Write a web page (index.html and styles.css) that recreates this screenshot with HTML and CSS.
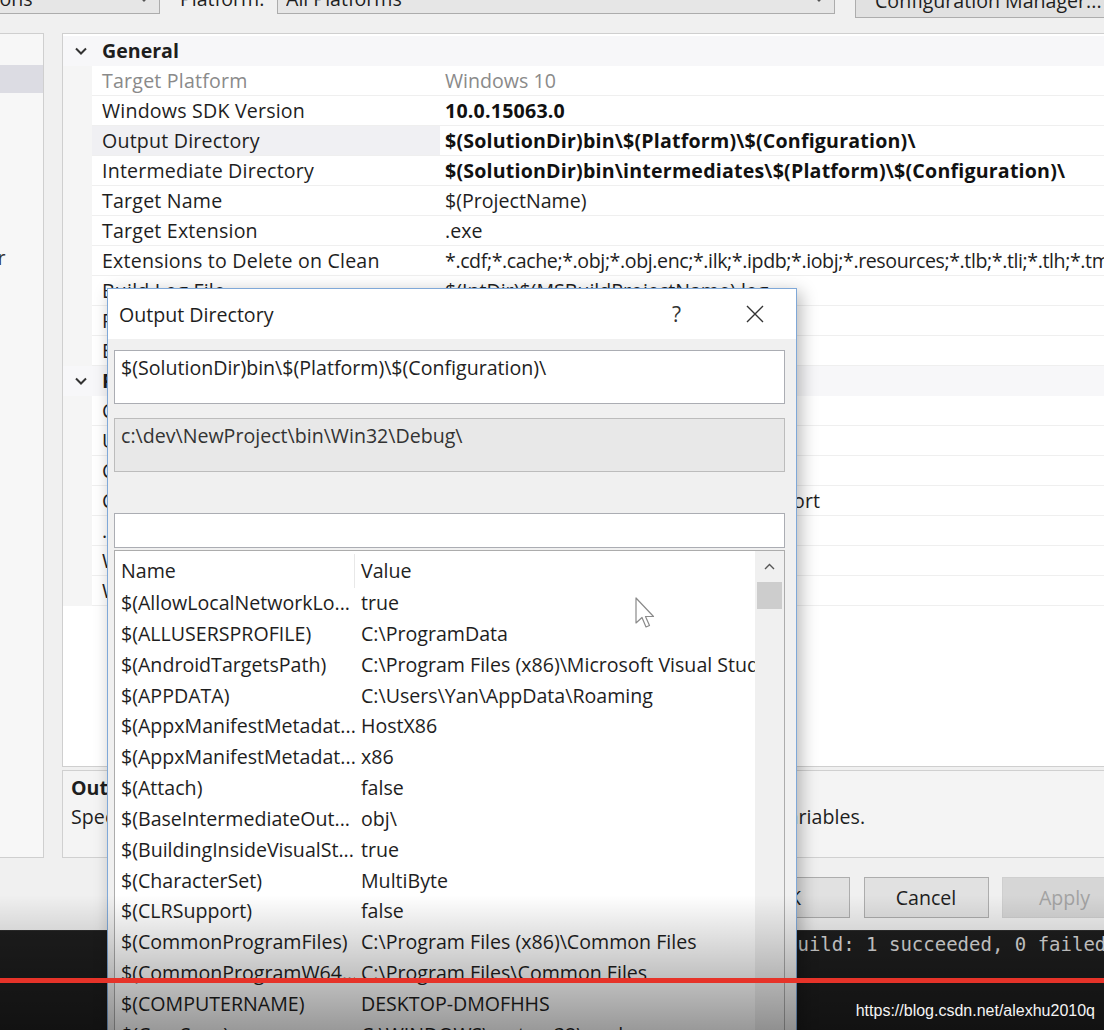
FILE: index.html
```html
<!DOCTYPE html>
<html>
<head>
<meta charset="utf-8">
<title>Property Pages</title>
<link rel="stylesheet" href="styles.css">
</head>
<body>
<div class="screen">
  <div class="toolbar">
    <div class="combo combo-config"><span>All Configurations</span><svg class="combo-chev" width="10" height="6" viewBox="0 0 10 6"><path d="M1 1 L5 5 L9 1" fill="none" stroke="#555" stroke-width="1.3"/></svg></div>
    <span class="tb-label">Platform:</span>
    <div class="combo combo-platform"><span>All Platforms</span><svg class="combo-chev" width="10" height="6" viewBox="0 0 10 6"><path d="M1 1 L5 5 L9 1" fill="none" stroke="#555" stroke-width="1.3"/></svg></div>
    <div class="btn btn-cfgmgr">Configuration Manager...</div>
  </div>

  <div class="main">
    <div class="tree-panel">
      <div class="tree-item"></div>
      <div class="tree-item selected"></div>
      <div class="tree-item tree-far"><span class="tree-cut">Linker</span></div>
    </div>

    <div class="right-col">
      <div class="grid">
        <div class="category">
          <div class="cat-head">
            <svg class="cat-chev" width="12" height="8" viewBox="0 0 12 8"><path d="M1 1.5 L6 6.5 L11 1.5" fill="none" stroke="#333" stroke-width="2"/></svg>
            <span class="cat-title">General</span>
          </div>
          <div class="prop readonly"><div class="pname">Target Platform</div><div class="pval">Windows 10</div></div>
          <div class="prop"><div class="pname">Windows SDK Version</div><div class="pval bold">10.0.15063.0</div></div>
          <div class="prop selected"><div class="pname">Output Directory</div><div class="pval bold">$(SolutionDir)bin\$(Platform)\$(Configuration)\</div></div>
          <div class="prop"><div class="pname">Intermediate Directory</div><div class="pval bold">$(SolutionDir)bin\intermediates\$(Platform)\$(Configuration)\</div></div>
          <div class="prop"><div class="pname">Target Name</div><div class="pval">$(ProjectName)</div></div>
          <div class="prop"><div class="pname">Target Extension</div><div class="pval">.exe</div></div>
          <div class="prop"><div class="pname">Extensions to Delete on Clean</div><div class="pval tight">*.cdf;*.cache;*.obj;*.obj.enc;*.ilk;*.ipdb;*.iobj;*.resources;*.tlb;*.tli;*.tlh;*.tmp;*.rsp;*.pgc;*.pgd;*.meta;*.tlog;*.manifest;*.res;*.pch;*.exp;*.idb;*.rep;*.xdc;*.pdb</div></div>
          <div class="prop"><div class="pname">Build Log File</div><div class="pval">$(IntDir)$(MSBuildProjectName).log</div></div>
          <div class="prop"><div class="pname">Platform Toolset</div><div class="pval">Visual Studio 2017 (v141)</div></div>
          <div class="prop"><div class="pname">Enable Managed Incremental Build</div><div class="pval">No</div></div>
        </div>
        <div class="category">
          <div class="cat-head">
            <svg class="cat-chev" width="12" height="8" viewBox="0 0 12 8"><path d="M1 1.5 L6 6.5 L11 1.5" fill="none" stroke="#333" stroke-width="2"/></svg>
            <span class="cat-title">Project Defaults</span>
          </div>
          <div class="prop"><div class="pname">Configuration Type</div><div class="pval">Application (.exe)</div></div>
          <div class="prop"><div class="pname">Use of MFC</div><div class="pval">Use Standard Windows Libraries</div></div>
          <div class="prop"><div class="pname">Character Set</div><div class="pval">Use Multi-Byte Character Set</div></div>
          <div class="prop"><div class="pname">Common Language Runtime Support</div><div class="pval wide">No Common Language Runtime Support</div></div>
          <div class="prop"><div class="pname">.NET Target Framework Version</div><div class="pval"></div></div>
          <div class="prop"><div class="pname">Whole Program Optimization</div><div class="pval">No Whole Program Optimization</div></div>
          <div class="prop"><div class="pname">Windows Store App Support</div><div class="pval">No</div></div>
        </div>
      </div>
      <div class="desc">
        <div class="desc-title">Output Directory</div>
        <div class="desc-text">Specifies a relative path to the output file directory; can include environment variables.</div>
      </div>
    </div>
  </div>

  <div class="buttons">
    <div class="btn dlg-btn">OK</div>
    <div class="btn dlg-btn">Cancel</div>
    <div class="btn dlg-btn disabled">Apply</div>
  </div>

  <div class="output">Build: 1 succeeded, 0 failed</div>

  <div class="dialog">
    <div class="dlg-title">
      <span class="dlg-caption">Output Directory</span>
      <span class="dlg-help">?</span>
      <svg class="dlg-close" width="18" height="18" viewBox="0 0 18 18"><path d="M1 1 L17 17 M17 1 L1 17" stroke="#333" stroke-width="1.4"/></svg>
    </div>
    <div class="dlg-body">
      <div class="textbox">$(SolutionDir)bin\$(Platform)\$(Configuration)\</div>
      <div class="textbox evaluated">c:\dev\NewProject\bin\Win32\Debug\</div>
      <div class="filterbox"></div>
      <div class="macro-list">
        <div class="macro-cols">
          <div class="macro-head"><div class="mname">Name</div><div class="mval">Value</div></div>
          <div class="macro-row"><div class="mname">$(AllowLocalNetworkLo...</div><div class="mval">true</div></div>
          <div class="macro-row"><div class="mname">$(ALLUSERSPROFILE)</div><div class="mval">C:\ProgramData</div></div>
          <div class="macro-row"><div class="mname">$(AndroidTargetsPath)</div><div class="mval">C:\Program Files (x86)\Microsoft Visual Studio\2017\Community\MSBuild</div></div>
          <div class="macro-row"><div class="mname">$(APPDATA)</div><div class="mval">C:\Users\Yan\AppData\Roaming</div></div>
          <div class="macro-row"><div class="mname">$(AppxManifestMetadat...</div><div class="mval">HostX86</div></div>
          <div class="macro-row"><div class="mname">$(AppxManifestMetadat...</div><div class="mval">x86</div></div>
          <div class="macro-row"><div class="mname">$(Attach)</div><div class="mval">false</div></div>
          <div class="macro-row"><div class="mname">$(BaseIntermediateOut...</div><div class="mval">obj\</div></div>
          <div class="macro-row"><div class="mname">$(BuildingInsideVisualSt...</div><div class="mval">true</div></div>
          <div class="macro-row"><div class="mname">$(CharacterSet)</div><div class="mval">MultiByte</div></div>
          <div class="macro-row"><div class="mname">$(CLRSupport)</div><div class="mval">false</div></div>
          <div class="macro-row"><div class="mname">$(CommonProgramFiles)</div><div class="mval">C:\Program Files (x86)\Common Files</div></div>
          <div class="macro-row"><div class="mname">$(CommonProgramW64...</div><div class="mval">C:\Program Files\Common Files</div></div>
          <div class="macro-row"><div class="mname">$(COMPUTERNAME)</div><div class="mval">DESKTOP-DMOFHHS</div></div>
          <div class="macro-row"><div class="mname">$(ComSpec)</div><div class="mval">C:\WINDOWS\system32\cmd.exe</div></div>
        </div>
        <div class="vscroll">
          <div class="vs-up"><svg width="11" height="7" viewBox="0 0 11 7"><path d="M1 6 L5.5 1.5 L10 6" fill="none" stroke="#555" stroke-width="1.4"/></svg></div>
          <div class="vs-thumb"></div>
        </div>
      </div>
    </div>
  </div>

  <svg class="cursor" width="20" height="34" viewBox="0 0 20 34"><path d="M1 1 L1 26 L7 20.5 L11 30 L14.5 28.5 L10.5 19.5 L18.5 19.5 Z" fill="#fff" stroke="#8a8a8a" stroke-width="1.2" stroke-linejoin="round"/></svg>

  <div class="shade"></div>
  <div class="progress"></div>
  <div class="watermark">https://blog.csdn.net/alexhu2010q</div>
</div>
</body>
</html>
```

FILE: styles.css
```css
html, body {
  margin: 0;
  padding: 0;
}
body {
  font-family: "Open Sans", "Noto Sans", sans-serif;
  font-size: 19.6px;
  color: #1e1e1e;
  background: #f0f0f0;
}
.screen {
  position: relative;
  width: 1104px;
  height: 1030px;
  overflow: hidden;
  background: #f0f0f0;
}

/* toolbar */
.toolbar {
  display: flex;
  align-items: flex-start;
  height: 34px;
  margin-top: -16px;
}
.toolbar > * { flex: none; }
.combo {
  box-sizing: border-box;
  height: 30px;
  border: 1px solid #acacac;
  background: #e6e6e6;
  display: flex;
  align-items: center;
  padding-left: 8px;
  line-height: 28px;
  white-space: nowrap;
}
.combo span { flex: 1; overflow: hidden; }
.combo-chev { margin-right: 10px; flex: none; }
.combo-config { width: 290px; margin-left: -130px; padding-left: 0; }
.tb-label {
  width: 97px;
  margin-left: 20px;
  line-height: 30px;
  white-space: nowrap;
}
.combo-platform { width: 558px; }
.btn {
  box-sizing: border-box;
  border: 1px solid #adadad;
  background: #e1e1e1;
  text-align: center;
  white-space: nowrap;
}
.btn-cfgmgr {
  margin-left: 20px;
  width: 270px;
  height: 34px;
  line-height: 32px;
  text-align: left;
  padding-left: 19px;
}

/* main area */
.main {
  display: flex;
  margin-top: 15px;
  height: 825px;
}
.tree-panel {
  box-sizing: border-box;
  flex: none;
  width: 46px;
  margin-left: -2px;
  height: 825px;
  border: 1px solid #cfcfcf;
  background: #f7f7f7;
  padding-top: 3px;
  overflow: hidden;
}
.tree-item {
  height: 28px;
  line-height: 28px;
  white-space: nowrap;
  color: #333;
}
.tree-item.selected { background: #dcdce3; }
.tree-far { margin-top: 151px; }
.tree-cut { display: inline-block; margin-left: -50px; }

.right-col {
  margin-left: 18px;
  width: 1052px;
  flex: none;
  display: flex;
  flex-direction: column;
  gap: 3px;
}
.grid {
  box-sizing: border-box;
  height: 734px;
  border: 1px solid #cfcfcf;
  background: #fff;
  padding-top: 2px;
  overflow: hidden;
}
.cat-head {
  height: 30px;
  display: flex;
  align-items: center;
  background: #f7f7f9;
}
.cat-chev { margin-left: 12px; width: 12px; flex: none; }
.cat-title {
  margin-left: 15px;
  font-weight: 700;
  line-height: 30px;
  white-space: nowrap;
}
.prop {
  display: flex;
  height: 30px;
  padding-left: 29px;
  background: #f5f5f5;
}
.pname, .pval {
  box-sizing: border-box;
  height: 30px;
  line-height: 29px;
  white-space: nowrap;
  overflow: hidden;
  background: #fff;
  border-bottom: 1px solid #efefef;
}
.pname { width: 348px; padding-left: 10px; flex: none; letter-spacing: 0.2px; }
.pval { flex: 1; padding-left: 5px; }
.pval.wide { letter-spacing: 0.15px; }
.pval.tight { letter-spacing: -0.4px; }
.prop.selected .pname { background: #f0f0f3; }
.prop.readonly .pname, .prop.readonly .pval { color: #8a8a8a; }
.pval.bold { font-weight: 700; color: #111; letter-spacing: 0.2px; }

.desc {
  box-sizing: border-box;
  height: 88px;
  border: 1px solid #d0d0d0;
  background: #f4f4f4;
  padding: 2px 8px;
  line-height: 29px;
  white-space: nowrap;
}
.desc-title { font-weight: 700; }
.desc-text { letter-spacing: 0.05px; }

/* dialog buttons */
.buttons {
  display: flex;
  gap: 13.5px;
  height: 72px;
  box-sizing: border-box;
  padding: 19px 0 0 725px;
}
.dlg-btn {
  width: 125px;
  height: 41px;
  line-height: 39px;
  flex: none;
}
.dlg-btn.disabled {
  color: #a3a3a3;
  background: #d6d6d6;
  border-color: #cfcfcf;
}

/* output window */
.output {
  height: 100px;
  box-sizing: border-box;
  background: #1e1e1e;
  border-top: 1px solid #2d2d2d;
  padding: 1px 0 0 786px;
  font-family: "DejaVu Sans Mono", "Liberation Mono", monospace;
  font-size: 19px;
  line-height: 24px;
  color: #dcdcdc;
  white-space: nowrap;
}

/* overlay dialog */
.dialog {
  position: absolute;
  left: 107px;
  top: 288px;
  width: 690px;
  height: 780px;
  box-sizing: border-box;
  border: 1px solid #7fa8d8;
  background: #f0f0f0;
  box-shadow: 4px 4px 16px rgba(0, 0, 0, 0.28);
}
.dlg-title {
  height: 50px;
  background: #fff;
  display: flex;
  align-items: center;
  padding-left: 11px;
}
.dlg-caption { flex: 1; white-space: nowrap; }
.dlg-help { width: 74px; color: #333; font-size: 21px; }
.dlg-close { margin-right: 32px; flex: none; }
.dlg-body {
  padding: 11px 11px 0 6px;
  display: flex;
  flex-direction: column;
}
.textbox {
  box-sizing: border-box;
  height: 54px;
  border: 1px solid #abadb3;
  background: #fff;
  padding: 5px 0 0 6px;
  line-height: 24px;
  white-space: nowrap;
  color: #222;
  margin-bottom: 14px;
}
.textbox.evaluated {
  background: #e8e8e8;
  border-color: #bcbcbc;
  margin-bottom: 41px;
  color: #333;
}
.filterbox {
  box-sizing: border-box;
  height: 35px;
  border: 1px solid #abadb3;
  background: #fff;
  margin-bottom: 2px;
}
.macro-list {
  box-sizing: border-box;
  height: 500px;
  border: 1px solid #acacac;
  background: #fff;
  display: flex;
  overflow: hidden;
}
.macro-cols {
  flex: 1;
  min-width: 0;
  overflow: hidden;
}
.macro-head, .macro-row {
  display: flex;
  white-space: nowrap;
}
.macro-head {
  box-sizing: border-box;
  height: 37px;
  padding-top: 3px;
  line-height: 34px;
  color: #222;
}
.macro-head .mname { border-right: 1px solid #e8e8e8; }
.macro-row {
  height: 30.85px;
  line-height: 30px;
}
.mname {
  box-sizing: border-box;
  width: 240px;
  flex: none;
  padding-left: 6px;
  overflow: hidden;
}
.mval {
  padding-left: 6px;
  overflow: hidden;
  flex: 1;
  min-width: 0;
}
.vscroll {
  width: 29px;
  flex: none;
  background: #f0f0f0;
}
.vs-up {
  height: 31px;
  display: flex;
  align-items: center;
  justify-content: center;
}
.vs-thumb {
  margin: 0 2px;
  height: 27px;
  background: #cdcdcd;
}

.cursor {
  position: absolute;
  left: 635px;
  top: 597px;
}

/* video overlays */
.shade {
  position: absolute;
  left: 0;
  right: 0;
  top: 895px;
  bottom: 0;
  background: linear-gradient(to bottom, rgba(0, 0, 0, 0), rgba(0, 0, 0, 0.4));
}
.progress {
  position: absolute;
  left: 0;
  right: 0;
  top: 978px;
  height: 5px;
  background: #e63329;
}
.watermark {
  position: absolute;
  right: 9px;
  top: 1000px;
  font-family: "Liberation Sans", Arial, sans-serif;
  font-size: 16px;
  line-height: 22px;
  color: #f4f4f4;
}
```
